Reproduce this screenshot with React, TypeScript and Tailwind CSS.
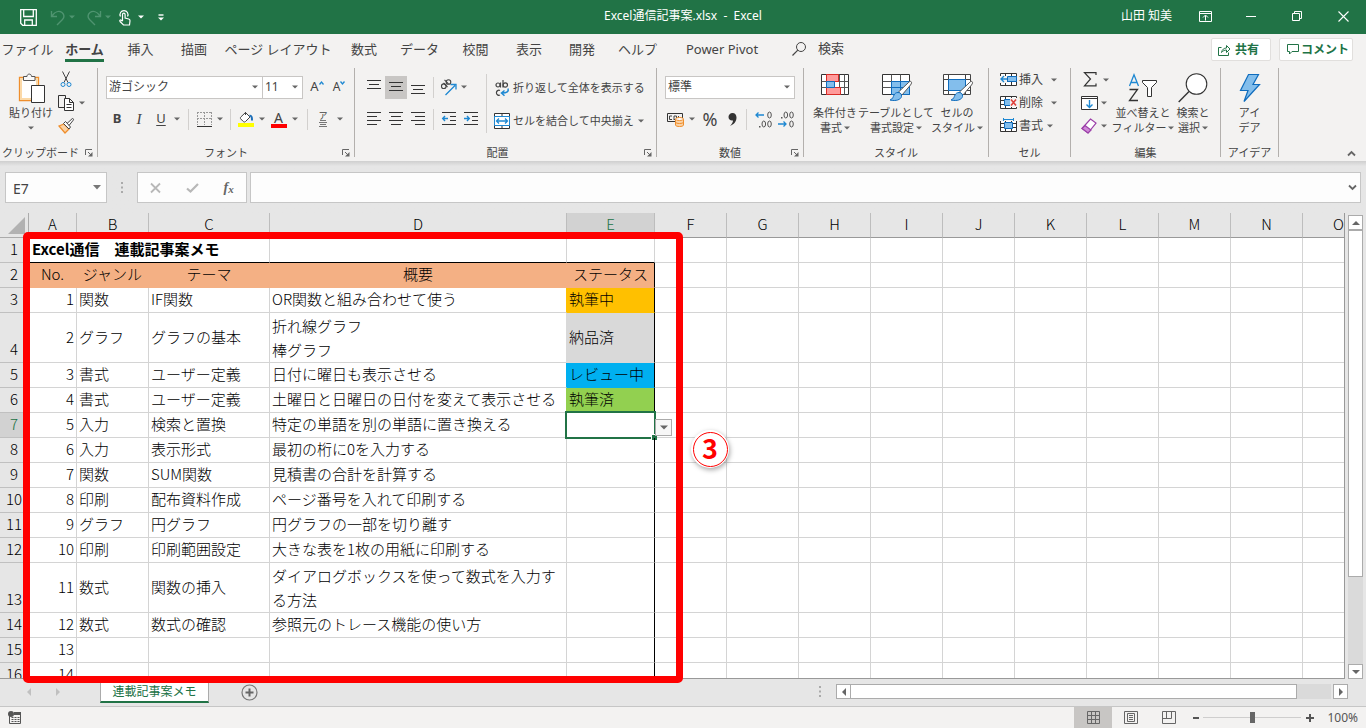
import type { ReactNode } from 'react'
import clsx from 'clsx'

const UI_FONT = "font-['Noto_Sans','Noto_Sans_CJK_JP',sans-serif]"
const CELL_FONT = "font-['Noto_Sans_CJK_JP',sans-serif]"

const tabs = [
  { label: 'ファイル', width: 'w-[55px]' },
  { label: 'ホーム', width: 'w-[59px]', active: true },
  { label: '挿入', width: 'w-[53px]' },
  { label: '描画', width: 'w-[54px]' },
  { label: 'ページ レイアウト', width: 'w-[114px]' },
  { label: '数式', width: 'w-[58px]' },
  { label: 'データ', width: 'w-[53px]' },
  { label: '校閲', width: 'w-[59px]' },
  { label: '表示', width: 'w-[48px]' },
  { label: '開発', width: 'w-[58px]' },
  { label: 'ヘルプ', width: 'w-[53px]' },
  { label: 'Power Pivot', width: 'w-[116px]' },
]

const emptyColumns = ['F', 'G', 'H', 'I', 'J', 'K', 'L', 'M', 'N', 'O']
const columns = ['A', 'B', 'C', 'D', 'E', ...emptyColumns]

type Row = {
  no: number
  genre?: string
  theme?: string
  summary?: string
  status?: string
  fill?: string
  edge?: string
  tall?: boolean
}

const rows: Row[] = [
  { no: 1, genre: '関数', theme: 'IF関数', summary: 'OR関数と組み合わせて使う', status: '執筆中', fill: 'bg-[#ffc000] border-b-[#ffc000]', edge: 'border-r-[#ffc000]' },
  { no: 2, genre: 'グラフ', theme: 'グラフの基本', summary: '折れ線グラフ\n棒グラフ', status: '納品済', fill: 'bg-[#d9d9d9] border-b-[#d9d9d9]', edge: 'border-r-[#d9d9d9]', tall: true },
  { no: 3, genre: '書式', theme: 'ユーザー定義', summary: '日付に曜日も表示させる', status: 'レビュー中', fill: 'bg-[#00b0f0] border-b-[#00b0f0]', edge: 'border-r-[#00b0f0]' },
  { no: 4, genre: '書式', theme: 'ユーザー定義', summary: '土曜日と日曜日の日付を変えて表示させる', status: '執筆済', fill: 'bg-[#92d050] border-b-[#92d050]', edge: 'border-r-[#92d050]' },
  { no: 5, genre: '入力', theme: '検索と置換', summary: '特定の単語を別の単語に置き換える' },
  { no: 6, genre: '入力', theme: '表示形式', summary: '最初の桁に0を入力する' },
  { no: 7, genre: '関数', theme: 'SUM関数', summary: '見積書の合計を計算する' },
  { no: 8, genre: '印刷', theme: '配布資料作成', summary: 'ページ番号を入れて印刷する' },
  { no: 9, genre: 'グラフ', theme: '円グラフ', summary: '円グラフの一部を切り離す' },
  { no: 10, genre: '印刷', theme: '印刷範囲設定', summary: '大きな表を1枚の用紙に印刷する' },
  { no: 11, genre: '数式', theme: '関数の挿入', summary: 'ダイアログボックスを使って数式を入力する方法', tall: true },
  { no: 12, genre: '数式', theme: '数式の確認', summary: '参照元のトレース機能の使い方' },
  { no: 13 },
  { no: 14 },
]

function Svg({ w, h, children, className }: { w: number; h: number; children: ReactNode; className?: string }) {
  return (
    <svg width={w} height={h} viewBox={`0 0 ${w} ${h}`} fill="none" stroke="#444" className={clsx('shrink-0 overflow-visible', className)} aria-hidden="true">
      {children}
    </svg>
  )
}

function Caret({ color = '#666' }: { color?: string }) {
  return (
    <Svg w={6} h={4}>
      <path d="M0 .5h6L3 3.5z" fill={color} stroke="none" />
    </Svg>
  )
}

function CaretButton({ label, className = 'w-[10px]', color }: { label: string; className?: string; color?: string }) {
  return (
    <button type="button" aria-label={label} className={clsx('flex h-5 shrink-0 items-center justify-center', className)}>
      <Caret color={color} />
    </button>
  )
}

function Tool({ label, className, children }: { label: string; className?: string; children: ReactNode }) {
  return (
    <button type="button" aria-label={label} className={clsx('flex h-[23px] shrink-0 items-center justify-center', className)}>
      {children}
    </button>
  )
}

function Divider({ className = 'mx-[5px]' }: { className?: string }) {
  return <div className={clsx('h-[21px] w-px shrink-0 bg-[#d2d0ce]', className)} />
}

function Launcher({ label }: { label: string }) {
  return (
    <button type="button" aria-label={label} className="absolute right-1 bottom-1">
      <Svg w={8} h={8}>
        <path d="M.5 6V.5H7M3 3l3 3" stroke="#666" />
        <path d="M7.500 3v4.500H3z" fill="#666" stroke="none" />
      </Svg>
    </button>
  )
}

function Group({ title, width, launcher, children }: { title: string; width: string; launcher?: boolean; children: ReactNode }) {
  return (
    <>
      <section aria-label={title} className={clsx('relative flex shrink-0 flex-col', width)}>
        <div className="h-[74px]">{children}</div>
        <div className="flex h-[19px] items-center justify-center pt-[3px] text-[11px] whitespace-nowrap">{title}</div>
        {launcher && <Launcher label={`${title}の設定`} />}
      </section>
      <div className="h-[89px] w-px shrink-0 bg-[#b3b0ad]" />
    </>
  )
}

function BigButton({ icon, lines, width, caret }: { icon: ReactNode; lines: string[]; width: string; caret?: boolean }) {
  return (
    <button type="button" className={clsx('flex shrink-0 flex-col items-center pt-1 text-[11px] leading-[15px] whitespace-nowrap', width)}>
      <span className="mb-px flex h-8 items-center">{icon}</span>
      <span>{lines[0]}</span>
      <span className="flex h-[15px] items-center gap-[2px]">
        {lines[1]}
        {caret && <Caret />}
      </span>
    </button>
  )
}

function AlignIcon({ y, lines }: { y: number[]; lines: [number, number][] }) {
  return (
    <Svg w={14} h={14}>
      {lines.map(([a, b], i) => (
        <path key={i} d={`M${a} ${y[i]}.5H${b}`} stroke="#333" />
      ))}
    </Svg>
  )
}

function TableGrid({ children }: { children?: ReactNode }) {
  return (
    <Svg w={30} h={30}>
      <path d="M1.500 1.500h27v20h-27z" fill="#fff" stroke="#333" />
      <path d="M1.500 8.500h27M1.500 14.500h27M10.500 1.500v20M19.500 1.500v20" stroke="#555" />
      {children}
    </Svg>
  )
}

function Brush() {
  return (
    <>
      <path d="M30 8.500c1 1 .5 2-.5 3.500L21 22l-3.500-3L27 10c1.200-1.200 2.200-2 3-1.500z" fill="#fff" stroke="#555" />
      <path d="M17 19.500c2 0 4 1.500 3.500 4C20 26.500 15 28.500 9 27c3-1.200 3-3 4-5 .8-1.500 2-2.500 4-2.500z" fill="#83beec" stroke="#0f6cbd" />
    </>
  )
}

function CellIcon({ kind }: { kind: 'insert' | 'delete' | 'format' }) {
  return (
    <Svg w={17} h={15}>
      <path d="M.5 1.500h16v12H.5zM.5 5.500h16M.5 9.500h16M5.500 1.500v12M11.500 1.500v12" fill="#fff" stroke="#333" />
      {kind === 'insert' && (
        <>
          <path d="M0 4h7v7H0z" fill="#f3f2f1" stroke="none" />
          <path d="M7.500 4.500h9v5h-9z" fill="#83beec" stroke="#0f6cbd" />
          <path d="M7 7H1M4 4L1 7l3 3" stroke="#1e88d2" strokeWidth="1.400" />
        </>
      )}
      {kind === 'delete' && (
        <>
          <path d="M4.500 4.500h6v6h-6z" fill="#83beec" stroke="#0f6cbd" />
          <path d="M10 3h7v9h-7z" fill="#f3f2f1" stroke="none" />
          <path d="M11 4.500l5 6M16 4.500l-5 6" stroke="#e0413b" strokeWidth="1.600" />
        </>
      )}
      {kind === 'format' && (
        <>
          <path d="M0 0h17v3H0z" fill="#f3f2f1" stroke="none" />
          <path d="M3 1.500h11M3.500 0v3M13.500 0v3" stroke="#1e88d2" />
          <path d="M4.500 4.500h8v6h-8z" fill="#83beec" stroke="#0f6cbd" />
        </>
      )}
    </Svg>
  )
}

function TitleBar() {
  return (
    <header className="grid h-[34px] shrink-0 grid-cols-[1fr_auto_1fr] items-center bg-[#217346] text-xs text-white">
      <div className="flex items-center pl-5">
        <Tool label="上書き保存" className="w-[17px]">
          <Svg w={17} h={17}>
            <path d="M.7.7h15.600v15.600H2.700l-2-2zM3.700 1v6.500h9.600V1M4.700 16v-5h7.600v5" stroke="#fff" strokeWidth="1.300" />
          </Svg>
        </Tool>
        <Tool label="元に戻す" className="ml-3 w-[18px]">
          <Svg w={16} h={17}>
            <path d="M1.500 2v5.500H7M2 7c3-4.500 7-5.500 10-3.500 2.500 2 2.500 5 .5 7L7 16" stroke="#4f9470" strokeWidth="1.400" />
          </Svg>
        </Tool>
        <CaretButton label="元に戻す履歴" color="#4f9470" />
        <Tool label="やり直し" className="ml-2 w-[18px]">
          <Svg w={16} h={17}>
            <path d="M14.500 2v5.500H9M14 7c-3-4.500-7-5.500-10-3.500-2.500 2-2.500 5-.5 7L9 16" stroke="#4f9470" strokeWidth="1.400" />
          </Svg>
        </Tool>
        <CaretButton label="やり直し履歴" color="#4f9470" />
        <Tool label="タッチ/マウス モードの切り替え" className="ml-[3px] w-[17px]">
          <Svg w={13} h={17}>
            <path d="M2.500 7.500a4 4 0 1 1 7 0M4.500 12V5.500a1.300 1.300 0 0 1 2.600 0V9l3.600 1c1 .3 1.300.8 1.300 1.700L11.500 16h-6L2 12.500c-.8-1 .5-2 1.300-1.300l1.200 1" stroke="#fff" strokeWidth="1.200" />
          </Svg>
        </Tool>
        <CaretButton label="モードの一覧" color="#fff" className="w-4" />
        <Tool label="クイック アクセス ツール バーのカスタマイズ" className="ml-2 w-2">
          <Svg w={6} h={7}>
            <path d="M.5 1h5" stroke="#fff" strokeWidth="1.400" />
            <path d="M0 3.500h6L3 6.500z" fill="#fff" stroke="none" />
          </Svg>
        </Tool>
      </div>
      <h1 className="pb-[2px]">Excel通信記事案.xlsx&nbsp; -&nbsp; Excel</h1>
      <div className="flex items-center justify-end pb-[2px]">
        <span className="pr-[10px]">山田 知美</span>
        <Tool label="リボンの表示オプション" className="w-[46px]">
          <Svg w={13} h={11}>
            <path d="M.5.5h12v10H.5zM.5 2.500h12M6.500 9.500v-5M4 6.500l2.500-2.500L9 6.500" stroke="#fff" />
          </Svg>
        </Tool>
        <Tool label="最小化" className="w-[46px]">
          <Svg w={10} h={1}><path d="M0 .5h10" stroke="#fff" /></Svg>
        </Tool>
        <Tool label="元に戻す (縮小)" className="w-[46px]">
          <Svg w={10} h={10}><path d="M.5 2.500h7v7h-7zM2.500 2.500v-2h7v7h-2" stroke="#fff" /></Svg>
        </Tool>
        <Tool label="閉じる" className="w-[46px]">
          <Svg w={11} h={11}><path d="M.5.5l10 10M10.500.5l-10 10" stroke="#fff" strokeWidth="1.100" /></Svg>
        </Tool>
      </div>
    </header>
  )
}

function TabBar() {
  return (
    <nav className="flex h-[34px] shrink-0 pr-[13px] text-[13px]">
      {tabs.map((tab) => (
        <a key={tab.label} href="#" className={clsx('flex h-[28px] shrink-0 justify-center pt-1 whitespace-nowrap', tab.width)}>
          <span className={clsx('h-6 leading-[22px]', tab.active && 'border-b-[3px] border-[#217346] font-bold')}>{tab.label}</span>
        </a>
      ))}
      <button type="button" className="ml-3 flex h-[30px] items-center gap-3">
        <Svg w={14} h={14}>
          <circle cx="9" cy="5" r="4.500" />
          <path d="M5.800 8.200L.5 13.500" strokeWidth="1.200" />
        </Svg>
        検索
      </button>
      <div className="ml-auto flex gap-2 pt-1 text-xs font-bold text-[#217346]">
        <button type="button" className="flex h-[23px] w-[60px] items-center gap-1 rounded-xs border border-[#e1dfdd] bg-white pl-[6px]">
          <Svg w={13} h={12}>
            <path d="M3.500 3.500h-3v8h10v-3M3.500 8.500C4 5.500 6 4 8.500 4V1.500l3.500 3.500-3.500 3.500V6C6.500 6 5 6.800 3.500 8.500z" stroke="#217346" />
          </Svg>
          共有
        </button>
        <button type="button" className="flex h-[23px] w-[74px] items-center gap-[2px] rounded-xs border border-[#e1dfdd] bg-white pl-[7px] whitespace-nowrap">
          <Svg w={12} h={11}>
            <path d="M.5.5h11v7H5l-2.500 2.500V7.500h-2z" stroke="#217346" />
          </Svg>
          コメント
        </button>
      </div>
    </nav>
  )
}

function SelectBox({ label, value, className }: { label: string; value: string; className: string }) {
  return (
    <div className={clsx('relative flex h-[23px] shrink-0 items-center justify-end border border-[#c8c6c4] bg-white pr-1', className)}>
      <select aria-label={label} defaultValue={value} className="absolute inset-0 w-full appearance-none bg-transparent pl-[2px] text-xs">
        <option>{value}</option>
      </select>
      <Caret />
    </div>
  )
}

function ClipboardGroup() {
  return (
    <Group title="クリップボード" width="w-[97px] pr-4" launcher>
      <div className="flex">
        <BigButton
          width="w-[56px] pl-[6px]"
          lines={['貼り付け', '']}
          caret
          icon={
            <Svg w={26} h={31}>
              <path d="M1.500 4.500h19v23h-19z" fill="#fff" stroke="#ef8e2c" strokeWidth="1.300" />
              <path d="M3 6h16v20H3z" stroke="#fbd9a8" strokeWidth="2" />
              <path d="M5.500 7.500v-4H9C9 .3 13.500.3 13.500 3.500H17v4z" fill="#f8f8f8" stroke="#555" />
              <path d="M13.500 12.500h13v17h-13z" fill="#fff" stroke="#333" />
            </Svg>
          }
        />
        <div className="flex flex-col">
          <Tool label="切り取り" className="w-5">
            <Svg w={12} h={17}>
              <path d="M2.500.5L8 11.500M9.500.5L4 11.500" />
              <circle cx="3" cy="13.500" r="2" stroke="#1e88d2" />
              <circle cx="9" cy="13.500" r="2" stroke="#1e88d2" />
            </Svg>
          </Tool>
          <div className="flex items-center">
            <Tool label="コピー" className="w-5">
              <Svg w={16} h={16}>
                <path d="M6 12.500H.5v-12h7V3" stroke="#333" />
                <path d="M6.500 3.500h5l4 4v8h-9zM11.500 3.500v4h4M8.500 9.500h5M8.500 12.500h5" fill="#fff" stroke="#333" />
              </Svg>
            </Tool>
            <CaretButton label="コピーのオプション" className="w-3" />
          </div>
          <Tool label="書式のコピー/貼り付け" className="w-5">
            <Svg w={16} h={16}>
              <path d="M1 8l5-2 5 5-4 4z" fill="#fbd3a6" stroke="#ef8e2c" strokeWidth="1.300" />
              <path d="M5.500 5.500l5.500 5.500 1.500-2-5-5.500zM9 5.500L14 .8c1-.8 2 .4 1.300 1.300L11 7.500" fill="#fff" />
            </Svg>
          </Tool>
        </div>
      </div>
    </Group>
  )
}

function FontGroup() {
  return (
    <Group title="フォント" width="w-[256px]" launcher>
      <div className="flex h-[38px] items-center pl-2">
        <SelectBox label="フォント" value="游ゴシック" className="w-[157px]" />
        <SelectBox label="フォント サイズ" value="11" className="w-[40px] border-l-0" />
        <Tool label="フォント サイズの拡大" className="ml-1 w-5 text-[13px]">
          A<Svg w={5} h={4} className="mb-2"><path d="M.5 3.500l2-2.500 2 2.500" stroke="#1e88d2" strokeWidth="1.300" /></Svg>
        </Tool>
        <Tool label="フォント サイズの縮小" className="ml-[2px] w-5 text-xs">
          A<Svg w={5} h={4} className="mb-2"><path d="M.5.5l2 2.500 2-2.500" stroke="#1e88d2" strokeWidth="1.300" /></Svg>
        </Tool>
      </div>
      <div className="flex h-[26px] items-center pl-2 text-[13px]">
        <Tool label="太字" className="w-[22px] font-bold">B</Tool>
        <Tool label="斜体" className="w-[22px] font-['Liberation_Serif',serif] text-[15px] italic">I</Tool>
        <Tool label="下線" className="w-[22px] underline underline-offset-2">U</Tool>
        <CaretButton label="下線の種類" />
        <Divider className="mx-[6px]" />
        <Tool label="罫線" className="w-[18px]">
          <Svg w={15} h={15}>
            <path d="M.5 0v13M7.500 0v13M14.500 0v13M0 .5h15M0 6.500h15" stroke="#999" strokeDasharray="2 1" />
            <path d="M0 14.500h15" stroke="#333" />
          </Svg>
        </Tool>
        <CaretButton label="罫線の種類" className="w-[14px]" />
        <Divider className="mr-[6px] ml-[3px]" />
        <Tool label="塗りつぶしの色" className="w-[18px]">
          <Svg w={17} h={16}>
            <path d="M7 1l5 5-4.500 4.500c-.8.700-1.600.7-2.200 0L2.800 8c-.6-.7-.6-1.300 0-2L7.500 1.500V4" fill="#fff" />
            <path d="M11.500 4.500c2.500.5 2.500 2 2.500 5" stroke="#1e6fb8" strokeWidth="2" />
            <path d="M0 12h16v4H0z" fill="#ff0" stroke="none" />
          </Svg>
        </Tool>
        <CaretButton label="塗りつぶしの色の一覧" className="w-[14px]" />
        <Tool label="フォントの色" className="w-[19px] flex-col">
          <span className="h-[13px] text-sm leading-[13px]">A</span>
          <span className="h-1 w-4 bg-[#f00]" />
        </Tool>
        <CaretButton label="フォントの色の一覧" className="w-[14px]" />
        <Divider className="mx-[5px]" />
        <Tool label="ふりがなの表示" className="w-[20px] flex-col">
          <span className="text-[9px] leading-[9px]">ア</span>
          <Svg w={8} h={8}><path d="M1 .5h6M0 2.500h8M1 4.500h6M0 6.500h8" stroke="#777" /></Svg>
        </Tool>
        <CaretButton label="ふりがなのオプション" className="w-[14px]" />
      </div>
    </Group>
  )
}

function AlignmentGroup() {
  return (
    <Group title="配置" width="w-[301px] pr-4" launcher>
      <div className="flex">
        <div className="w-[131px] shrink-0 pl-2">
          <div className="flex h-[38px] items-center">
            <Tool label="上揃え" className="w-[22px]"><AlignIcon y={[0, 4, 8]} lines={[[0, 14], [2, 12], [0, 14]]} /></Tool>
            <Tool label="上下中央揃え" className="w-[22px] bg-[#c8c6c4]"><AlignIcon y={[2, 6, 10]} lines={[[0, 14], [2, 12], [0, 14]]} /></Tool>
            <Tool label="下揃え" className="w-[22px]"><AlignIcon y={[5, 9, 13]} lines={[[0, 14], [2, 12], [0, 14]]} /></Tool>
            <Divider className="mr-[5px] ml-1" />
            <Tool label="方向" className="w-5">
              <Svg w={18} h={18}>
                <path d="M5.500 17L15 7.500M10.500 6.500h5.500v5" stroke="#1e88d2" strokeWidth="1.300" />
                <g strokeWidth="1.100">
                  <circle cx="3.800" cy="8.200" r="2.300" />
                  <path d="M3.500 5l4 4" />
                  <circle cx="8.500" cy="4" r="2.300" />
                  <path d="M4.500 1.800l4 4" />
                </g>
              </Svg>
            </Tool>
            <CaretButton label="方向のオプション" />
          </div>
          <div className="flex h-[26px] items-center">
            <Tool label="左揃え" className="w-[22px]"><AlignIcon y={[0, 4, 8, 12]} lines={[[0, 14], [0, 10], [0, 14], [0, 10]]} /></Tool>
            <Tool label="中央揃え" className="w-[22px]"><AlignIcon y={[0, 4, 8, 12]} lines={[[0, 14], [2, 12], [0, 14], [2, 12]]} /></Tool>
            <Tool label="右揃え" className="w-[22px]"><AlignIcon y={[0, 4, 8, 12]} lines={[[0, 14], [4, 14], [0, 14], [4, 14]]} /></Tool>
            <Divider className="mr-1 ml-1" />
            <Tool label="インデントを減らす" className="w-[22px]">
              <Svg w={14} h={14}>
                <path d="M0 .5h14M8 4.500h6M8 8.500h6M0 12.500h14" stroke="#333" />
                <path d="M6 6.500H1M3 4L.7 6.500 3 9" stroke="#1e88d2" strokeWidth="1.400" />
              </Svg>
            </Tool>
            <Tool label="インデントを増やす" className="w-[22px]">
              <Svg w={14} h={14}>
                <path d="M0 .5h14M8 4.500h6M8 8.500h6M0 12.500h14" stroke="#333" />
                <path d="M0 6.500h5M3 4l2.300 2.500L3 9" stroke="#1e88d2" strokeWidth="1.400" />
              </Svg>
            </Tool>
          </div>
        </div>
        <div className="mt-[6px] h-[59px] w-px shrink-0 bg-[#d2d0ce]" />
        <div className="pl-[7px] text-[11px] whitespace-nowrap">
          <button type="button" className="flex h-10 items-center gap-[3px]">
            <Svg w={16} h={17}>
              <g strokeWidth="1.200">
                <circle cx="4" cy="5" r="2" />
                <path d="M6.500 2.500v5M9 0v7.500" />
                <circle cx="11.300" cy="5" r="2.200" />
                <path d="M6 10.500a2.500 2.500 0 1 0 0 4.500" />
              </g>
              <path d="M14 8.500c1 3-1 4.500-6 4.500M10.500 10.500L7.500 13l3 2.700" stroke="#1e88d2" strokeWidth="1.500" />
            </Svg>
            折り返して全体を表示する
          </button>
          <div className="flex h-[26px] items-center">
            <button type="button" className="flex items-center gap-[3px]">
              <Svg w={16} h={16}>
                <path d="M.5.500h15v15H.5zM8 0v3M8 13v3" fill="#fff" stroke="#333" />
                <path d="M.5 3.500h15v9H.5z" fill="#fff" stroke="#1e88d2" />
                <path d="M2.500 8h11M5 5.500L2.500 8 5 10.500M11 5.500L13.500 8 11 10.500" stroke="#1e88d2" strokeWidth="1.300" />
              </Svg>
              セルを結合して中央揃え
            </button>
            <CaretButton label="結合のオプション" className="w-[14px]" />
          </div>
        </div>
      </div>
    </Group>
  )
}

function DecimalIcon({ arrow }: { arrow: 'left' | 'right' }) {
  const up = arrow === 'left'
  return (
    <Svg w={17} h={17}>
      <g stroke="#555">
        <ellipse cx="14.500" cy="4" rx="1.800" ry="3" />
        <ellipse cx="14.500" cy="13" rx="1.800" ry="3" />
        <ellipse cx="8.800" cy={up ? 13 : 4} rx="1.800" ry="3" />
      </g>
      <path d={up ? 'M4 15h1.500v1.500H4z' : 'M4 6h1.500v1.500H4z'} fill="#555" stroke="none" />
      {up
        ? <path d="M9 4H1M3.500 1.500L1 4l2.500 2.500" stroke="#1e88d2" strokeWidth="1.300" />
        : <path d="M1 13h8M6.500 10.500L9 13l-2.500 2.500" stroke="#1e88d2" strokeWidth="1.300" />}
    </Svg>
  )
}

function NumberGroup() {
  return (
    <Group title="数値" width="w-[146px]" launcher>
      <div className="flex h-[38px] items-center px-2">
        <SelectBox label="表示形式" value="標準" className="w-full" />
      </div>
      <div className="flex h-[26px] items-center px-2">
        <Tool label="通貨表示形式" className="w-[22px]">
          <Svg w={18} h={15}>
            <path d="M.5 1.500h15v8H.5z" stroke="#333" />
            <path d="M5 4H2.500v3.500H5M7 8V4h2.500v3.500H7M11.500 8V4" />
            <path d="M8.500 7v6c0 2 8 2 8 0V7" fill="#fbd3a6" stroke="#ef8e2c" />
            <ellipse cx="12.500" cy="7" rx="4" ry="1.500" fill="#fff" stroke="#ef8e2c" />
            <path d="M8.500 10c0 2 8 2 8 0" stroke="#ef8e2c" />
          </Svg>
        </Tool>
        <CaretButton label="通貨の一覧" />
        <Tool label="パーセント スタイル" className="w-[26px] text-lg">%</Tool>
        <Tool label="桁区切りスタイル" className="w-[18px]">
          <Svg w={9} h={13}>
            <path d="M4.500 0C7 0 8.500 1.800 8.500 4.500 8.500 8.500 6 11.500 2 13c2-2.200 3-4 3-5.500C2.500 8 .5 6.500.5 4 .5 1.800 2.200 0 4.500 0z" fill="#333" stroke="none" />
          </Svg>
        </Tool>
        <Divider className="mr-[6px] ml-[5px]" />
        <Tool label="小数点以下の表示桁数を増やす" className="w-[21px]"><DecimalIcon arrow="left" /></Tool>
        <Tool label="小数点以下の表示桁数を減らす" className="w-[23px]"><DecimalIcon arrow="right" /></Tool>
      </div>
    </Group>
  )
}

function StyleGroup() {
  return (
    <Group title="スタイル" width="w-[184px]">
      <div className="flex pl-1">
        <BigButton
          width="w-[54px]"
          lines={['条件付き', '書式']}
          caret
          icon={
            <TableGrid>
              <path d="M6.500 1.500v20M24.500 1.500v20" stroke="#555" />
              <path d="M6.500 1.500h12v7h-12zM6.500 14.500h14v7h-14z" fill="#ff9a9a" stroke="#d92b26" />
              <path d="M6.500 8.500h8v6h-8z" fill="#83beec" stroke="#0f6cbd" />
            </TableGrid>
          }
        />
        <BigButton
          width="w-[68px]"
          lines={['テーブルとして', '書式設定']}
          caret
          icon={
            <TableGrid>
              <path d="M10.500 8.500h18v13h-18zM19.500 8.500v13M10.500 14.500h18" fill="#83beec" stroke="#0f6cbd" />
              <Brush />
            </TableGrid>
          }
        />
        <BigButton
          width="w-[54px]"
          lines={['セルの', 'スタイル']}
          caret
          icon={
            <Svg w={30} h={30}>
              <path d="M1.500 1.500h27v20h-27zM1.500 6.500h27M1.500 17.500h27M6.500 1.500v20M23.500 1.500v20" fill="#fff" />
              <path d="M6.500 6.500h17v11h-17z" fill="#83beec" stroke="#0f6cbd" />
              <Brush />
            </Svg>
          }
        />
      </div>
    </Group>
  )
}

function CellsGroup() {
  const items = [
    { kind: 'insert' as const, label: '挿入', gap: 'gap-2' },
    { kind: 'delete' as const, label: '削除', gap: 'gap-2' },
    { kind: 'format' as const, label: '書式', gap: 'gap-1' },
  ]
  return (
    <Group title="セル" width="w-[81px]">
      <div className="pl-[11px] text-xs">
        {items.map((item) => (
          <button key={item.kind} type="button" className={clsx('flex h-[23px] items-center', item.gap)}>
            <span className="flex items-center gap-[2px]">
              <CellIcon kind={item.kind} />
              {item.label}
            </span>
            <Caret />
          </button>
        ))}
      </div>
    </Group>
  )
}

function EditGroup() {
  return (
    <Group title="編集" width="w-[149px]">
      <div className="flex pl-[10px]">
        <div className="w-[34px] shrink-0">
          <button type="button" aria-label="合計" className="flex h-[23px] items-center gap-[6px] pl-[2px]">
            <Svg w={14} h={15}>
              <path d="M13 3V.7H1.500l6 6.300-6 6.800H13V11.500" stroke="#333" strokeWidth="1.200" />
            </Svg>
            <Caret />
          </button>
          <button type="button" aria-label="フィル" className="flex h-[23px] items-center gap-[3px]">
            <Svg w={17} h={14}>
              <path d="M.5.500h16v13H.5zM.5 2.500h16" fill="#fff" stroke="#333" />
              <path d="M8.500 4v7.500M5.500 8.500l3 3 3-3" stroke="#1e88d2" strokeWidth="1.400" />
            </Svg>
            <Caret />
          </button>
          <button type="button" aria-label="クリア" className="flex h-[23px] items-center gap-[3px]">
            <Svg w={17} h={16}>
              <path d="M9.500 1l5.500 4-8 10-6-4.500z" fill="#fff" stroke="#9b3fa8" strokeWidth="1.200" />
              <path d="M4 7.500l6 4.500-3 3-6-4.500z" fill="#d08ad8" stroke="#9b3fa8" strokeWidth="1.200" />
            </Svg>
            <Caret />
          </button>
        </div>
        <BigButton
          width="w-[56px]"
          lines={['並べ替えと', 'フィルター']}
          caret
          icon={
            <Svg w={30} h={28}>
              <path d="M1.500 12L6 .8 10.500 12M3 8.500h6" stroke="#1e88d2" strokeWidth="1.300" />
              <path d="M1.500 15.500h8l-8 11h8.500" stroke="#333" strokeWidth="1.300" />
              <path d="M14.500 6.500h14v2l-5 5v9h-4v-9l-5-5z" fill="#fff" stroke="#333" />
            </Svg>
          }
        />
        <BigButton
          width="w-[44px]"
          lines={['検索と', '選択']}
          caret
          icon={
            <Svg w={30} h={30}>
              <circle cx="18.500" cy="11" r="10.300" fill="#fff" stroke="#333" strokeWidth="1.100" />
              <path d="M11 18.500L.7 29" stroke="#333" strokeWidth="1.400" />
            </Svg>
          }
        />
      </div>
    </Group>
  )
}

function Ribbon() {
  return (
    <div className="flex h-[93px] shrink-0">
      <ClipboardGroup />
      <FontGroup />
      <AlignmentGroup />
      <NumberGroup />
      <StyleGroup />
      <CellsGroup />
      <EditGroup />
      <Group title="アイデア" width="w-[57px]">
        <BigButton
          width="w-full"
          lines={['アイ', 'デア']}
          icon={
            <Svg w={22} h={30}>
              <path d="M9.500 1.500h10L14 11.500h6.500L5 28.500l4-11H1.500z" fill="#83beec" stroke="#0f6cbd" strokeWidth="1.200" />
            </Svg>
          }
        />
      </Group>
      <button type="button" aria-label="リボンを折りたたむ" className="mr-[10px] mb-1 ml-auto self-end">
        <Svg w={9} h={7}><path d="M1 5.500L4.500 2 8 5.500" stroke="#666" strokeWidth="1.800" /></Svg>
      </button>
    </div>
  )
}

function Dots() {
  return (
    <Svg w={2} h={11}>
      <path d="M1 0v2M1 4.500v2M1 9v2" stroke="#aaa" strokeWidth="2" />
    </Svg>
  )
}

function FormulaBar() {
  return (
    <div className="flex h-[52px] shrink-0 bg-linear-to-b from-[#cfcfcf] to-[#e6e6e6] to-10% pt-[11px] pr-[5px] pl-[5px]">
      <div className="relative h-[31px] w-[102px] shrink-0">
        <input aria-label="名前ボックス" defaultValue="E7" className="h-full w-full border border-[#c6c6c6] bg-[#fdfdfd] pt-[2px] pl-[7px] text-sm" />
        <button type="button" aria-label="名前の一覧" className="absolute top-[13px] right-[6px]">
          <Svg w={8} h={5}><path d="M0 0h8L4 4.500z" fill="#777" stroke="none" /></Svg>
        </button>
      </div>
      <div className="flex h-[31px] w-[30px] items-center justify-center"><Dots /></div>
      <div className="flex h-[31px] w-[110px] shrink-0 items-center justify-around border border-[#c6c6c6] bg-[#fdfdfd]">
        <Tool label="キャンセル"><Svg w={11} h={10}><path d="M1 .5l9 9M10 .5l-9 9" stroke="#b8b8b8" strokeWidth="1.800" /></Svg></Tool>
        <Tool label="入力"><Svg w={13} h={10}><path d="M1 5.500l3.500 3L12 1" stroke="#b8b8b8" strokeWidth="2.200" /></Svg></Tool>
        <Tool label="関数の挿入" className="font-['Liberation_Serif',serif] text-sm font-bold text-[#666] italic">
          f<span className="pt-1 text-[11px]">x</span>
        </Tool>
      </div>
      <div className="relative ml-[3px] h-[31px] grow">
        <input aria-label="数式バー" className="h-full w-full border border-[#c6c6c6] bg-[#fdfdfd] px-2 text-[13px]" />
        <button type="button" aria-label="数式バーの展開" className="absolute top-3 right-1">
          <Svg w={9} h={7}><path d="M1 1.500L4.500 5 8 1.500" stroke="#666" strokeWidth="1.800" /></Svg>
        </button>
      </div>
    </div>
  )
}

function RowHead({ n, selected }: { n: number; selected?: boolean }) {
  return (
    <th scope="row" className={clsx('border-r border-b border-[#c0c0c0] pb-[2px] text-center align-bottom font-light', selected ? 'bg-[#d2d2d2] text-[#217346]' : 'bg-[#e6e6e6]')}>
      {n}
    </th>
  )
}

function EmptyCells() {
  return emptyColumns.map((c) => <td key={c} className="border-r border-b border-[#d4d4d4]" />)
}

function Sheet() {
  return (
    <table className={clsx('w-[1375px] table-fixed border-separate border-spacing-0 bg-white text-[15px] leading-[22px] font-light text-black', CELL_FONT)}>
      <colgroup>
        <col className="w-[29px]" />
        <col className="w-[48px]" />
        <col className="w-[72px]" />
        <col className="w-[121px]" />
        <col className="w-[297px]" />
        <col className="w-[88px]" />
        {emptyColumns.map((c) => <col key={c} className="w-[72px]" />)}
      </colgroup>
      <thead>
        <tr className="h-[25px]">
          <td className="border-r border-b border-[#ababab] bg-[#e6e6e6]">
            <Svg w={17} h={17} className="ml-2"><path d="M17 0v17H0z" fill="#b2b2b2" stroke="none" /></Svg>
          </td>
          {columns.map((c) => (
            <th key={c} scope="col" className={clsx('border-r border-b border-r-[#bdbdbd] border-b-[#999] pb-[2px] font-light', c === 'E' ? 'bg-[#d2d2d2] text-[#217346]' : 'bg-[#e6e6e6]')}>
              {c}
            </th>
          ))}
        </tr>
      </thead>
      <tbody>
        <tr className="h-[25px]">
          <RowHead n={1} />
          <td colSpan={3} className="border-r border-b border-r-[#d4d4d4] border-b-black pb-[2px] pl-[3px] font-bold">Excel通信　連載記事案メモ</td>
          <td className="border-r border-b border-r-[#d4d4d4] border-b-black" />
          <td className="border-r border-b border-r-[#d4d4d4] border-b-black" />
          <EmptyCells />
        </tr>
        <tr className="h-[25px]">
          <RowHead n={2} />
          {['No.', 'ジャンル', 'テーマ', '概要', 'ステータス'].map((t) => (
            <td key={t} className={clsx('border-r border-b border-[#f4b084] bg-[#f4b084] pb-[2px] text-center', t === 'ステータス' && 'border-r-black')}>{t}</td>
          ))}
          <EmptyCells />
        </tr>
        {rows.map((row) => (
          <tr key={row.no} className={row.tall ? 'h-[50px]' : 'h-[25px]'}>
            <RowHead n={row.no + 2} selected={row.no === 5} />
            <td className="border-r border-b border-[#d4d4d4] pr-[2px] pb-[2px] text-right">{row.no}</td>
            <td className="border-r border-b border-[#d4d4d4] pb-[2px] pl-[2px]">{row.genre}</td>
            <td className="border-r border-b border-[#d4d4d4] pb-[2px] pl-[2px]">{row.theme}</td>
            <td className={clsx('border-r border-b border-b-[#d4d4d4] pl-[2px] whitespace-pre-line', row.tall ? 'leading-6' : 'pb-[2px]', row.edge ?? 'border-r-[#d4d4d4]')}>{row.summary}</td>
            <td className={clsx('relative border-r border-b border-r-black pb-[2px] pl-[2px]', row.fill ?? 'border-b-[#d4d4d4]')}>
              {row.status}
              {row.no === 5 && (
                <>
                  <div className="absolute -top-[2px] -right-[2px] -bottom-[2px] -left-[2px] border-2 border-[#217346]" />
                  <div className="absolute -right-[3px] -bottom-[3px] size-[6px] border-t border-l border-white bg-[#217346]" />
                  <button type="button" aria-label="リストから選択" className="absolute top-[6px] left-full ml-px flex h-[17px] w-[17px] items-center justify-center border border-[#ababab] bg-[#f7f7f7]">
                    <Svg w={8} h={5}><path d="M0 .5h8L4 4.500z" fill="#666" stroke="none" /></Svg>
                  </button>
                </>
              )}
            </td>
            <EmptyCells />
          </tr>
        ))}
      </tbody>
    </table>
  )
}

function ScrollButton({ label, d }: { label: string; d: string }) {
  return (
    <button type="button" aria-label={label} className="flex size-[15px] shrink-0 items-center justify-center border border-[#ababab] bg-white">
      <Svg w={8} h={8}><path d={d} fill="#666" stroke="none" /></Svg>
    </button>
  )
}

function SheetArea() {
  return (
    <main className="relative flex min-h-0 grow bg-[#e6e6e6]">
      <div className="min-w-0 grow overflow-hidden border-r border-b border-[#999]">
        <Sheet />
      </div>
      <div className="flex w-[21px] shrink-0 flex-col pt-[2px] pl-[3px]">
        <ScrollButton label="上へスクロール" d="M0 6h8L4 2z" />
        <div className="w-[15px] grow bg-[#dadada]">
          <div className="h-4/5 border border-[#ababab] bg-white" />
        </div>
        <ScrollButton label="下へスクロール" d="M0 2h8L4 6z" />
      </div>
      <div className="pointer-events-none absolute top-[19px] -bottom-1 left-[23px] z-10 w-[660px] rounded-[5px] border-[7px] border-[#f00]" />
      <div className="absolute top-[217px] left-[691px] z-10 flex size-[38px] items-center justify-center rounded-full bg-white shadow-[1px_2px_5px_rgba(0,0,0,0.35)]">
        <span className={clsx('flex size-[35px] items-center justify-center rounded-full border border-[#f00] pb-1 text-[27px] leading-none font-bold text-[#f00]', CELL_FONT)}>3</span>
      </div>
    </main>
  )
}

function SheetTabs() {
  return (
    <div className="flex h-[27px] shrink-0 bg-[#e6e6e6] text-xs">
      <div className="flex h-[26px] w-[100px] shrink-0 items-center gap-6 pl-[26px]">
        <button type="button" aria-label="前のシート"><Svg w={6} h={8}><path d="M5 0v8L1 4z" fill="#c0c0c0" stroke="none" /></Svg></button>
        <button type="button" aria-label="次のシート"><Svg w={6} h={8}><path d="M0 0v8l4-4z" fill="#c0c0c0" stroke="none" /></Svg></button>
      </div>
      <a href="#" className="flex h-6 w-[109px] shrink-0 items-center justify-center border-x border-b-2 border-x-[#ababab] border-b-[#217346] bg-white pt-1 text-[#217346]">
        連載記事案メモ
      </a>
      <button type="button" aria-label="新しいシート" className="ml-8 flex h-[26px] items-center">
        <Svg w={17} h={17}>
          <circle cx="8.500" cy="8.500" r="7.500" stroke="#777" strokeWidth="1.200" />
          <path d="M4.500 8.500h8M8.500 4.500v8" stroke="#666" strokeWidth="2" />
        </Svg>
      </button>
      <div className="ml-auto flex h-[26px] w-[547px] items-center pb-px">
        <Dots />
        <div className="ml-[15px] flex grow items-center">
          <ScrollButton label="左へスクロール" d="M6 0v8L2 4z" />
          <div className="mr-[2px] h-[15px] grow bg-[#dadada]">
            <div className="h-full w-[93%] border border-l-0 border-[#ababab] bg-white" />
          </div>
          <ScrollButton label="右へスクロール" d="M2 0v8l4-4z" />
        </div>
        <div className="w-[18px]" />
      </div>
    </div>
  )
}

function StatusBar() {
  return (
    <footer className="flex h-[22px] shrink-0 items-center border-t border-[#c6c6c6] text-xs text-[#555]">
      <Tool label="マクロの記録" className="ml-2 w-[14px]">
        <Svg w={14} h={13}>
          <path d="M1.500 5v7.500h11V1.500H7" stroke="#555" />
          <path d="M6 1h7v3H6zM3.500 6h2v1h-2zM6.500 6h2v1h-2zM9.500 6h2v1h-2zM3.500 8h2v1h-2zM6.500 8h2v1h-2zM9.500 8h2v1h-2zM3.500 10h2v1h-2zM6.500 10h2v1h-2zM9.500 10h2v1h-2z" fill="#555" stroke="none" />
          <circle cx="3" cy="3" r="3" fill="#555" stroke="none" />
        </Svg>
      </Tool>
      <div className="ml-auto flex h-full items-center">
        <button type="button" aria-label="標準" className="flex h-full w-[38px] items-center justify-center bg-[#c8c6c4]">
          <Svg w={13} h={13}><path d="M.5.500h12v12H.5zM.5 4.500h12M.5 8.500h12M4.500.5v12M8.500.5v12" stroke="#666" /></Svg>
        </button>
        <button type="button" aria-label="ページ レイアウト表示" className="flex h-full w-[38px] items-center justify-center">
          <Svg w={14} h={13}><path d="M.5.500h13v12H.5zM3.500 2.500h7v8h-7zM5 4.500h4M5 6.500h4M5 8.500h4" stroke="#666" /></Svg>
        </button>
        <button type="button" aria-label="改ページ プレビュー" className="flex h-full w-[38px] items-center justify-center">
          <Svg w={14} h={13}><path d="M.5.500h13v12H.5zM.5 7.500h9v-7M4.500.5v7" stroke="#666" /></Svg>
        </button>
        <button type="button" aria-label="縮小" className="ml-[2px] flex h-full w-3 items-center justify-center">
          <Svg w={6} h={2}><path d="M0 1h6" stroke="#555" strokeWidth="2" /></Svg>
        </button>
        <input
          type="range"
          aria-label="ズーム"
          min={0}
          max={200}
          defaultValue={100}
          className="mx-px h-[11px] w-[98px] appearance-none bg-linear-to-b from-transparent from-45% via-[#aaa] via-45% to-transparent to-55% [&::-webkit-slider-thumb]:h-[11px] [&::-webkit-slider-thumb]:w-[5px] [&::-webkit-slider-thumb]:appearance-none [&::-webkit-slider-thumb]:bg-[#666]"
        />
        <button type="button" aria-label="拡大" className="flex h-full w-4 items-center justify-center">
          <Svg w={8} h={8}><path d="M0 4h8M4 0v8" stroke="#555" strokeWidth="2" /></Svg>
        </button>
        <button type="button" className="w-12 pr-2 text-right">100%</button>
      </div>
    </footer>
  )
}

export default function App() {
  return (
    <div className={clsx('flex h-screen flex-col overflow-hidden bg-[#f3f2f1] text-[#444]', UI_FONT)}>
      <TitleBar />
      <TabBar />
      <Ribbon />
      <FormulaBar />
      <SheetArea />
      <SheetTabs />
      <StatusBar />
    </div>
  )
}
